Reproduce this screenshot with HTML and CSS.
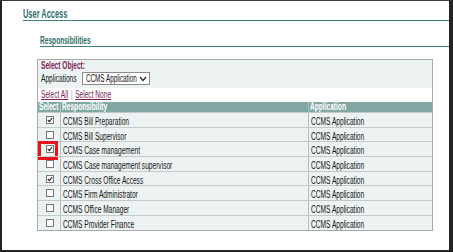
FILE: index.html
```html
<!DOCTYPE html>
<html lang="en">
<head>
  <meta charset="UTF-8" />
  <title>User Access</title>
  <link rel="stylesheet" href="styles.css">
</head>
<body>
  <div class="frame">
    <h1><span class="sq">User Access</span></h1>
    <h2><span class="sq">Responsibilities</span></h2>

    <div class="panel">
      <div class="obj"><span class="sq">Select Object:</span></div>
      <div class="apps">
        <span class="sq">Applications</span>
        <div class="dropdown">
          <span class="sq">CCMS Application</span>
          <svg width="8" height="6" viewBox="0 0 8 6"><path d="M1 1 L4 4.5 L7 1" fill="none" stroke="#222" stroke-width="1.2"/></svg>
        </div>
      </div>
      <div class="links">
        <span class="sq"><a href="#">Select All</a><span class="bar">|</span><a href="#">Select None</a></span>
      </div>

      <table class="grid">
        <colgroup>
          <col class="c-sel"><col class="c-resp"><col class="c-app">
        </colgroup>
        <thead>
          <tr>
            <th><span class="sq">Select</span></th>
            <th><span class="sq">Responsibility</span></th>
            <th><span class="sq">Application</span></th>
          </tr>
        </thead>
        <tbody>
          <tr>
            <td class="chk"><span class="box on"></span></td>
            <td><span class="sq">CCMS Bill Preparation</span></td>
            <td><span class="sq">CCMS Application</span></td>
          </tr>
          <tr>
            <td class="chk"><span class="box"></span></td>
            <td><span class="sq">CCMS Bill Supervisor</span></td>
            <td><span class="sq">CCMS Application</span></td>
          </tr>
          <tr>
            <td class="chk"><span class="box on"></span><span class="mark"></span></td>
            <td><span class="sq">CCMS Case management</span></td>
            <td><span class="sq">CCMS Application</span></td>
          </tr>
          <tr>
            <td class="chk"><span class="box"></span></td>
            <td><span class="sq">CCMS Case management supervisor</span></td>
            <td><span class="sq">CCMS Application</span></td>
          </tr>
          <tr>
            <td class="chk"><span class="box on"></span></td>
            <td><span class="sq">CCMS Cross Office Access</span></td>
            <td><span class="sq">CCMS Application</span></td>
          </tr>
          <tr>
            <td class="chk"><span class="box"></span></td>
            <td><span class="sq">CCMS Firm Administrator</span></td>
            <td><span class="sq">CCMS Application</span></td>
          </tr>
          <tr>
            <td class="chk"><span class="box"></span></td>
            <td><span class="sq">CCMS Office Manager</span></td>
            <td><span class="sq">CCMS Application</span></td>
          </tr>
          <tr>
            <td class="chk"><span class="box"></span></td>
            <td><span class="sq">CCMS Provider Finance</span></td>
            <td><span class="sq">CCMS Application</span></td>
          </tr>
        </tbody>
      </table>
    </div>
  </div>
</body>
</html>
```

FILE: styles.css
```css
body {
  margin: 0;
  background: #fff;
  font-family: 'Liberation Sans', Arial, sans-serif;
  color: #151515;
}
.frame {
  width: 453px;
  height: 252px;
  box-sizing: border-box;
  border-style: solid;
  border-color: #3a3a3a #222 #222 #222;
  border-width: 1px 4px 2px 2px;
  overflow: hidden;
}
/* the screenshot is squeezed sideways, so is the text */
.sq {
  display: inline-block;
  transform: scaleX(0.66);
  transform-origin: left center;
  white-space: nowrap;
}
h1 {
  margin: 7px 0 0 21px;
  height: 12px;
  line-height: 12px;
  font-size: 12px;
  color: #2f6f6a;
  border-bottom: 1px solid #3f8279;
}
h1 .sq {
  transform: scaleX(0.62);
}
h2 {
  margin: 15px 0 0 38px;
  height: 10px;
  line-height: 10px;
  font-size: 10px;
  color: #2f6f6a;
  border-bottom: 1px solid #3f8279;
}
.panel {
  margin: 12px 0 0 35px;
  width: 396px;
  box-sizing: border-box;
  border: 1px solid #a9a9a9;
  background: #edf3f3;
}
.obj {
  height: 11px;
  line-height: 11px;
  padding-left: 3px;
  font-size: 10px;
  font-weight: bold;
  color: #7d1d55;
}
.apps {
  height: 16px;
  display: flex;
  align-items: flex-start;
  padding-left: 3px;
  font-size: 10px;
}
.apps > .sq {
  width: 41px;
  line-height: 16px;
}
.dropdown {
  margin-top: 1px;
  width: 68px;
  height: 13px;
  box-sizing: border-box;
  border: 1px solid #8a8a8a;
  background: #fff;
  display: flex;
  align-items: center;
  padding: 0 2px 0 3px;
}
.dropdown .sq {
  flex: none;
  width: 52px;
  transform: scaleX(0.63);
}
.dropdown svg {
  flex: none;
  margin-left: auto;
}
.links {
  margin-top: 1px;
  height: 14px;
  line-height: 14px;
  padding-left: 3px;
  background: #fff;
  font-size: 10px;
}
.links a {
  color: #7d1d55;
}
.links .bar {
  color: #aaa;
  margin: 0 4px;
}
.grid {
  width: 100%;
  table-layout: fixed;
  border-collapse: separate;
  border-spacing: 0;
  font-size: 10px;
}
.c-sel { width: 22px; }
.c-resp { width: 248px; }
.c-app { width: 124px; }
.grid th {
  height: 10px;
  padding: 0 0 0 1px;
  line-height: 10px;
  text-align: left;
  background: #82a8a3;
  color: #fff;
  font-weight: bold;
  overflow: visible;
}
.grid th + th {
  border-left: 1px solid #a6c2be;
}
.grid td {
  height: 13.7px;
  padding: 0 0 0 2px;
  border-top: 1px solid #c4c9c9;
  vertical-align: middle;
  line-height: 12px;
}
.grid td .sq {
  transform: translateY(1.5px) scaleX(0.66);
}
.grid td + td {
  border-left: 1px solid #b9bebe;
}
.grid td.chk {
  position: relative;
  padding-left: 8px;
}
.box {
  display: block;
  width: 8px;
  height: 8px;
  box-sizing: border-box;
  border: 1px solid #7a7a7a;
  background: #fff;
}
.box.on {
  background: #fff url("data:image/svg+xml,%3Csvg xmlns='http://www.w3.org/2000/svg' width='6' height='6' viewBox='0 0 6 6'%3E%3Cpath d='M0.8 3 L2.4 4.6 L5.2 1' fill='none' stroke='%23222' stroke-width='1.1'/%3E%3C/svg%3E") center / 6px 6px no-repeat;
}
.mark {
  position: absolute;
  left: 0;
  top: -1px;
  width: 20px;
  height: 19px;
  box-sizing: border-box;
  border: 3px solid #e8141b;
}
```
